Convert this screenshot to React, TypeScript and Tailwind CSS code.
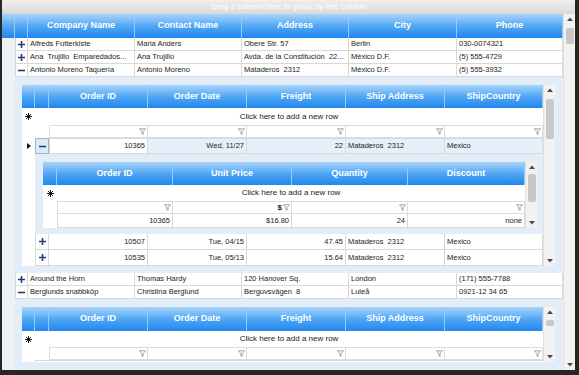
import React from "react";

type Col = { label: string; w: string };

const mainCols: Col[] = [
  { label: "Company Name", w: "w-[107px]" },
  { label: "Contact Name", w: "w-[107px]" },
  { label: "Address", w: "w-[107px]" },
  { label: "City", w: "w-[108px]" },
  { label: "Phone", w: "w-[106px]" },
];

const orderCols: Col[] = [
  { label: "Order ID", w: "w-[99px]" },
  { label: "Order Date", w: "w-[99px]" },
  { label: "Freight", w: "w-[99px]" },
  { label: "Ship Address", w: "w-[99px]" },
  { label: "ShipCountry", w: "w-[98px]" },
];

const detailCols: Col[] = [
  { label: "Order ID", w: "w-[116px]" },
  { label: "Unit Price", w: "w-[119px]" },
  { label: "Quantity", w: "w-[116px]" },
  { label: "Discount", w: "w-[117px]" },
];

const customers = [
  { open: false, cells: ["Alfreds Futterkiste", "Maria Anders", "Obere Str. 57", "Berlin", "030-0074321"] },
  { open: false, cells: ["Ana  Trujillo  Emparedados...", "Ana Trujillo", "Avda. de la Constitución  22...", "México D.F.", "(5) 555-4729"] },
  { open: true, cells: ["Antonio Moreno Taquería", "Antonio Moreno", "Mataderos  2312", "México D.F.", "(5) 555-3932"] },
];

const customersAfter = [
  { open: false, cells: ["Around the Horn", "Thomas Hardy", "120 Hanover Sq.", "London", "(171) 555-7788"] },
  { open: true, cells: ["Berglunds snabbköp", "Christina Berglund", "Berguvsvägen  8", "Luleå", "0921-12 34 65"] },
];

const orders = [
  ["10507", "Tue, 04/15", "47.45", "Mataderos  2312", "Mexico"],
  ["10535", "Tue, 05/13", "15.64", "Mataderos  2312", "Mexico"],
];

const Plus = () => (
  <svg width="7" height="7" viewBox="0 0 7 7">
    <path d="M3.5 0v7M0 3.5h7" stroke="#1f3f7c" strokeWidth="1.6" />
  </svg>
);

const Minus = () => (
  <svg width="7" height="7" viewBox="0 0 7 7">
    <path d="M0 3.5h7" stroke="#1f3f7c" strokeWidth="1.6" />
  </svg>
);

const Funnel = () => (
  <svg width="7" height="7" viewBox="0 0 7 7">
    <path d="M0.5 0.8h6L4.1 3.6v2.8L2.9 5.7V3.6z" fill="none" stroke="#8c8c8c" strokeWidth="0.8" />
  </svg>
);

const Asterisk = () => (
  <svg width="7" height="7" viewBox="0 0 7 7">
    <path d="M3.5 0v7M0 3.5h7M1 1l5 5M6 1L1 6" stroke="#1a1a1a" strokeWidth="1" />
  </svg>
);

const Arrow = ({ up }: { up?: boolean }) => (
  <svg width="6" height="4" viewBox="0 0 6 4">
    <path d={up ? "M0 4L3 0.5L6 4Z" : "M0 0L3 3.5L6 0Z"} fill="#4a4a4a" />
  </svg>
);

const ScrollBar = ({ h, thumb }: { h: string; thumb: string }) => (
  <div className={`w-[12px] ${h} shrink-0 bg-[#f2f2f2] border-l border-[#e0e0e0] flex flex-col items-center`}>
    <div className="h-[10px] flex items-center justify-center shrink-0">
      <Arrow up />
    </div>
    <div className={`w-[8px] rounded-[2px] bg-[#c8c8c8] shrink-0 ${thumb}`} />
    <div className="flex-1" />
    <div className="h-[10px] flex items-center justify-center shrink-0">
      <Arrow />
    </div>
  </div>
);

const Header = ({ lead, cols, h }: { lead: string[]; cols: Col[]; h: string }) => (
  <div className={`flex ${h} shrink-0 bg-linear-to-b from-[#a8d4fa] via-[#4fa7f4] to-[#1f87ee]`}>
    {lead.map((w, i) => (
      <div key={i} className={`${w} shrink-0 border-r border-[#96cbf8]`} />
    ))}
    {cols.map((c) => (
      <div
        key={c.label}
        className={`${c.w} shrink-0 border-r border-[#96cbf8] flex items-center justify-center text-white font-bold text-[9px]`}
      >
        {c.label}
      </div>
    ))}
  </div>
);

const AddRow = ({ lead, h }: { lead: string; h: string }) => (
  <div className={`flex ${h} shrink-0 items-center bg-white`}>
    <div className={`${lead} shrink-0 flex justify-center`}>
      <Asterisk />
    </div>
    <div className="flex-1 text-center text-[8px] text-[#1a1a1a]">Click here to add a new row</div>
  </div>
);

const FilterRow = ({ lead, cols, priceCol }: { lead: string; cols: Col[]; priceCol?: number }) => (
  <div className="flex h-[13px] shrink-0 bg-white">
    <div className={`${lead} shrink-0`} />
    {cols.map((c, i) => (
      <div
        key={c.label}
        className={`${c.w} shrink-0 border-t border-b border-r border-[#dcdcdc] ${i === 0 ? "border-l" : ""} flex items-center justify-end gap-[1px] pr-[1px] text-[8px] font-bold text-[#222]`}
      >
        {priceCol === i && <span>$</span>}
        <Funnel />
      </div>
    ))}
  </div>
);

const cell = "shrink-0 border-r border-b border-[#d8d8d8] px-[2px] flex items-center text-[7.5px] text-[#1c1c1c] whitespace-pre overflow-hidden";

const MainRow = ({ open, cells }: { open: boolean; cells: string[] }) => (
  <div className="flex h-[13px] shrink-0">
    <div className="w-[13px] shrink-0" />
    <div className="w-[13px] shrink-0 bg-white border-l border-r border-b border-[#d8d8d8] flex items-center justify-center">
      {open ? <Minus /> : <Plus />}
    </div>
    {cells.map((c, i) => (
      <div key={i} className={`${mainCols[i].w} ${cell} bg-white`}>
        {c}
      </div>
    ))}
  </div>
);

const OrderRow = ({ cells }: { cells: string[] }) => (
  <div className="flex h-[16px] shrink-0 bg-white">
    <div className="w-[13px] shrink-0" />
    <div className="w-[14px] shrink-0 border-l border-r border-b border-[#d8d8d8] flex items-center justify-center">
      <Plus />
    </div>
    {cells.map((c, i) => (
      <div key={i} className={`${orderCols[i].w} ${cell} ${i < 3 ? "justify-end" : ""}`}>
        {c}
      </div>
    ))}
  </div>
);

const ExpandedOrder = () => (
  <div className="flex h-[16px] shrink-0 bg-white">
    <div className="w-[13px] shrink-0 flex items-center justify-center">
      <svg width="4" height="6" viewBox="0 0 4 6">
        <path d="M0 0L4 3L0 6Z" fill="#111" />
      </svg>
    </div>
    <div className="w-[14px] shrink-0 bg-[#dce9f7] border border-[#9db5ce] flex items-center justify-center">
      <Minus />
    </div>
    {["10365", "Wed, 11/27", "22", "Mataderos  2312", "Mexico"].map((c, i) => (
      <div
        key={i}
        className={`${orderCols[i].w} ${cell} ${i < 3 ? "justify-end" : ""} ${i === 0 ? "bg-white border-t border-l border-[#a8bdd4]" : "bg-[#e6f0fb] border-t border-[#c8d8ea]"}`}
      >
        {c}
      </div>
    ))}
  </div>
);

const DetailsGrid = () => (
  <div className="flex h-[80px] shrink-0">
    <div className="w-[13px] shrink-0 bg-white" />
    <div className="flex-1 bg-[#e3edf8] pl-[8px] pt-[8px]">
      <div className="flex w-[494px] h-[66px] bg-white">
        <div className="w-[482px] flex flex-col overflow-hidden">
          <Header lead={["w-[14px]"]} cols={detailCols} h="h-[23px]" />
          <AddRow lead="w-[14px]" h="h-[16px]" />
          <FilterRow lead="w-[14px]" cols={detailCols} priceCol={1} />
          <div className="flex h-[14px] shrink-0 bg-white">
            <div className="w-[14px] shrink-0" />
            {["10365", "$16.80", "24", "none"].map((c, i) => (
              <div key={i} className={`${detailCols[i].w} ${cell} justify-end ${i === 0 ? "border-l" : ""}`}>
                {c}
              </div>
            ))}
          </div>
        </div>
        <ScrollBar h="h-[66px]" thumb="mt-[2px] h-[28px]" />
      </div>
    </div>
  </div>
);

export default function App() {
  return (
    <div className="w-[579px] h-[375px] bg-[#262626] overflow-hidden font-['Liberation_Sans',Arial,sans-serif]">
      <div className="ml-[2px] w-[573px] h-[370px] bg-[#eef2f6] flex flex-col overflow-hidden">
        <div className="h-[14px] shrink-0 bg-linear-to-b from-[#efefef] to-[#d9d9d9] flex items-center justify-center text-[8px] text-white">
          Drag a column here to group by this column
        </div>
        <div className="flex flex-1 min-h-0">
          <div className="w-[561px] flex flex-col overflow-hidden">
            <Header lead={["w-[13px]", "w-[13px]"]} cols={mainCols} h="h-[24px]" />
            {customers.map((r, i) => (
              <MainRow key={i} open={r.open} cells={r.cells} />
            ))}

            {/* Orders of Antonio Moreno */}
            <div className="ml-[13px] w-[547px] h-[196px] shrink-0 bg-[#e3edf8] pl-[7px] pt-[8px]">
              <div className="flex w-[533px] h-[181px] bg-white">
                <div className="w-[521px] flex flex-col overflow-hidden">
                  <Header lead={["w-[13px]", "w-[14px]"]} cols={orderCols} h="h-[23px]" />
                  <AddRow lead="w-[13px]" h="h-[17px]" />
                  <FilterRow lead="w-[27px]" cols={orderCols} />
                  <ExpandedOrder />
                  <DetailsGrid />
                  {orders.map((o, i) => (
                    <OrderRow key={i} cells={o} />
                  ))}
                </div>
                <ScrollBar h="h-[181px]" thumb="mt-[4px] h-[40px]" />
              </div>
            </div>

            {customersAfter.map((r, i) => (
              <MainRow key={i} open={r.open} cells={r.cells} />
            ))}

            {/* Orders of Berglunds */}
            <div className="ml-[13px] w-[547px] flex-1 min-h-0 bg-[#e3edf8] pl-[7px] pt-[8px]">
              <div className="flex w-[533px] h-[55px] bg-white">
                <div className="w-[521px] flex flex-col overflow-hidden">
                  <Header lead={["w-[13px]", "w-[14px]"]} cols={orderCols} h="h-[24px]" />
                  <AddRow lead="w-[13px]" h="h-[16px]" />
                  <FilterRow lead="w-[27px]" cols={orderCols} />
                  <div className="flex h-[16px] shrink-0">
                    <div className="w-[13px] shrink-0" />
                    <div className="flex-1 border-t border-l border-[#d8d8d8]" />
                  </div>
                </div>
                <ScrollBar h="h-[55px]" thumb="mt-[3px] h-[6px]" />
              </div>
            </div>
          </div>
          <ScrollBar h="h-full" thumb="mt-[4px] h-[16px]" />
        </div>
      </div>
    </div>
  );
}
